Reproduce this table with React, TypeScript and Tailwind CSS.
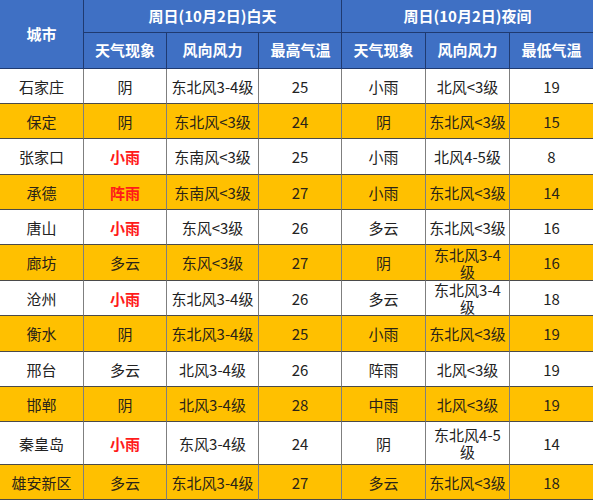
import React from "react";

type Row = {
  city: string;
  dayWx: string;
  dayWind: string;
  high: string;
  nightWx: string;
  nightWind: string;
  low: string;
  h: string;
};

const RED = new Set(["小雨", "阵雨"]);

const ROWS: Row[] = [
  { city: "石家庄", dayWx: "阴", dayWind: "东北风3-4级", high: "25", nightWx: "小雨", nightWind: "北风<3级", low: "19", h: "h-[35px]" },
  { city: "保定", dayWx: "阴", dayWind: "东北风<3级", high: "24", nightWx: "阴", nightWind: "东北风<3级", low: "15", h: "h-[35px]" },
  { city: "张家口", dayWx: "小雨", dayWind: "东南风<3级", high: "25", nightWx: "小雨", nightWind: "北风4-5级", low: "8", h: "h-[36px]" },
  { city: "承德", dayWx: "阵雨", dayWind: "东南风<3级", high: "27", nightWx: "小雨", nightWind: "东北风<3级", low: "14", h: "h-[35px]" },
  { city: "唐山", dayWx: "小雨", dayWind: "东风<3级", high: "26", nightWx: "多云", nightWind: "东北风<3级", low: "16", h: "h-[35px]" },
  { city: "廊坊", dayWx: "多云", dayWind: "东风<3级", high: "27", nightWx: "阴", nightWind: "东北风3-4级", low: "16", h: "h-[36px]" },
  { city: "沧州", dayWx: "小雨", dayWind: "东北风3-4级", high: "26", nightWx: "多云", nightWind: "东北风3-4级", low: "18", h: "h-[35px]" },
  { city: "衡水", dayWx: "阴", dayWind: "东北风3-4级", high: "25", nightWx: "小雨", nightWind: "东北风<3级", low: "19", h: "h-[36px]" },
  { city: "邢台", dayWx: "多云", dayWind: "北风3-4级", high: "26", nightWx: "阵雨", nightWind: "北风<3级", low: "19", h: "h-[35px]" },
  { city: "邯郸", dayWx: "阴", dayWind: "北风3-4级", high: "28", nightWx: "中雨", nightWind: "北风<3级", low: "19", h: "h-[35px]" },
  { city: "秦皇岛", dayWx: "小雨", dayWind: "东风3-4级", high: "24", nightWx: "阴", nightWind: "东北风4-5级", low: "14", h: "h-[43px]" },
  { city: "雄安新区", dayWx: "多云", dayWind: "东北风3-4级", high: "27", nightWx: "多云", nightWind: "东北风<3级", low: "18", h: "h-[35px]" },
];

const WIDTHS = ["w-[84px]", "w-[83px]", "w-[92px]", "w-[83px]", "w-[84px]", "w-[84px]", "w-[83px]"];

function Cell({
  w,
  children,
  red,
  last,
}: {
  w: string;
  children: React.ReactNode;
  red?: boolean;
  last?: boolean;
}) {
  return (
    <div
      className={`${w} shrink-0 flex items-center justify-center px-[2px] text-center leading-[17px] border-b border-b-[#4a4a4a] ${
        last ? "" : "border-r border-r-[#7f7f7f]"
      } ${red ? "font-bold text-[#ff1a1a]" : ""}`}
    >
      {children}
    </div>
  );
}

function HeadCell({ w, children, last }: { w: string; children: React.ReactNode; last?: boolean }) {
  return (
    <div
      className={`${w} shrink-0 flex items-center justify-center ${
        last ? "" : "border-r border-r-[#1f3a70]"
      }`}
    >
      {children}
    </div>
  );
}

export default function App() {
  return (
    <div
      className="w-[593px] h-[500px] overflow-hidden bg-white text-[15px] text-[#222]"
      style={{ fontFamily: '"Noto Sans CJK SC", "Noto Sans", sans-serif' }}
    >
      {/* header */}
      <div className="flex h-[69px] bg-[#3f70c4] text-white font-bold border-b border-b-[#1f3a70]">
        <HeadCell w="w-[84px]">城市</HeadCell>
        <div className="flex flex-col w-[258px] shrink-0 border-r border-r-[#1f3a70]">
          <div className="h-[33px] flex items-center justify-center border-b border-b-[#1f3a70]">
            周日(10月2日)白天
          </div>
          <div className="flex flex-1">
            <HeadCell w="w-[83px]">天气现象</HeadCell>
            <HeadCell w="w-[92px]">风向风力</HeadCell>
            <HeadCell w="w-[83px]" last>
              最高气温
            </HeadCell>
          </div>
        </div>
        <div className="flex flex-col w-[251px] shrink-0">
          <div className="h-[33px] flex items-center justify-center border-b border-b-[#1f3a70]">
            周日(10月2日)夜间
          </div>
          <div className="flex flex-1">
            <HeadCell w="w-[84px]">天气现象</HeadCell>
            <HeadCell w="w-[84px]">风向风力</HeadCell>
            <HeadCell w="w-[83px]" last>
              最低气温
            </HeadCell>
          </div>
        </div>
      </div>

      {/* body */}
      {ROWS.map((r, i) => (
        <div key={r.city} className={`flex ${r.h} ${i % 2 === 1 ? "bg-[#ffc000] text-[#2a2418]" : "bg-white"}`}>
          <Cell w={WIDTHS[0]}>{r.city}</Cell>
          <Cell w={WIDTHS[1]} red={RED.has(r.dayWx)}>
            {r.dayWx}
          </Cell>
          <Cell w={WIDTHS[2]}>{r.dayWind}</Cell>
          <Cell w={WIDTHS[3]}>{r.high}</Cell>
          <Cell w={WIDTHS[4]}>{r.nightWx}</Cell>
          <Cell w={WIDTHS[5]}>{r.nightWind}</Cell>
          <Cell w={WIDTHS[6]} last>
            {r.low}
          </Cell>
        </div>
      ))}
    </div>
  );
}
